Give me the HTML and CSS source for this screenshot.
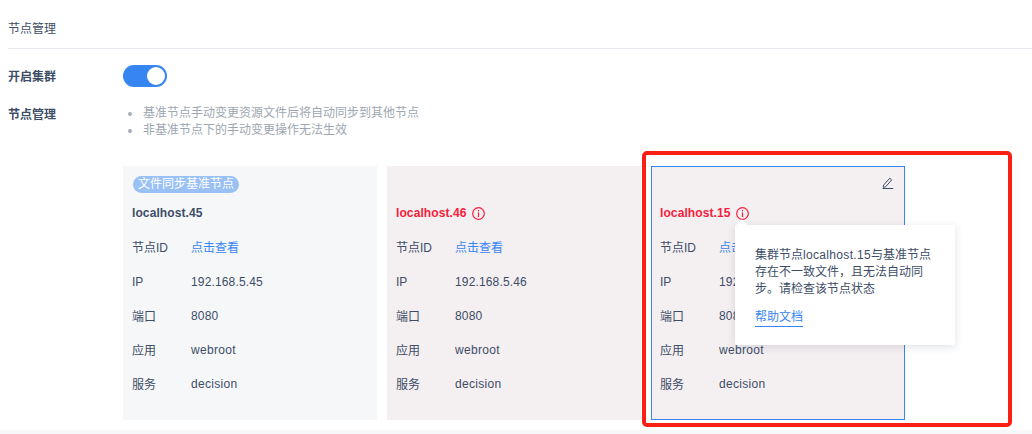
FILE: index.html
```html
<!DOCTYPE html>
<html lang="zh">
<head>
<meta charset="utf-8">
<title>节点管理</title>
<link rel="stylesheet" href="styles.css">
</head>
<body>
<div class="page">
  <header class="title">节点管理</header>
  <section class="form">
    <div class="row-switch">
      <div class="label">开启集群</div>
      <div class="switch"><span class="knob"></span></div>
    </div>
    <div class="row-manage">
      <div class="label">节点管理</div>
      <ul class="tips">
        <li>基准节点手动变更资源文件后将自动同步到其他节点</li>
        <li>非基准节点下的手动变更操作无法生效</li>
      </ul>
    </div>
    <div class="cards">
      <article class="card">
        <div class="badge-row"><span class="badge">文件同步基准节点</span></div>
        <div class="host">localhost.45</div>
        <dl class="props">
          <div class="prop"><dt>节点ID</dt><dd><a class="link">点击查看</a></dd></div>
          <div class="prop"><dt>IP</dt><dd>192.168.5.45</dd></div>
          <div class="prop"><dt>端口</dt><dd>8080</dd></div>
          <div class="prop"><dt>应用</dt><dd>webroot</dd></div>
          <div class="prop"><dt>服务</dt><dd>decision</dd></div>
        </dl>
      </article>
      <article class="card warn">
        <div class="badge-row"></div>
        <div class="host">localhost.46
          <svg class="info" viewBox="0 0 13 13"><circle cx="6.5" cy="6.5" r="5.8"/><path d="M6.5 3v1.4M6.5 5.4v4.6"/></svg>
        </div>
        <dl class="props">
          <div class="prop"><dt>节点ID</dt><dd><a class="link">点击查看</a></dd></div>
          <div class="prop"><dt>IP</dt><dd>192.168.5.46</dd></div>
          <div class="prop"><dt>端口</dt><dd>8080</dd></div>
          <div class="prop"><dt>应用</dt><dd>webroot</dd></div>
          <div class="prop"><dt>服务</dt><dd>decision</dd></div>
        </dl>
      </article>
      <article class="card warn active">
        <svg class="edit" viewBox="0 0 12 12"><path d="M1.5 8.2 7.8 1.2l1.9 1.7-6.2 7-2.2.4zM.6 11.5h10.6"/></svg>
        <div class="badge-row"></div>
        <div class="host">localhost.15
          <svg class="info" viewBox="0 0 13 13"><circle cx="6.5" cy="6.5" r="5.8"/><path d="M6.5 3v1.4M6.5 5.4v4.6"/></svg>
        </div>
        <dl class="props">
          <div class="prop"><dt>节点ID</dt><dd><a class="link">点击查看</a></dd></div>
          <div class="prop"><dt>IP</dt><dd>192.168.5.15</dd></div>
          <div class="prop"><dt>端口</dt><dd>8080</dd></div>
          <div class="prop"><dt>应用</dt><dd>webroot</dd></div>
          <div class="prop"><dt>服务</dt><dd>decision</dd></div>
        </dl>
        <div class="tooltip">
          <p>集群节点<span class="latin">localhost.15</span>与基准节点存在不一致文件，且无法自动同步。请检查该节点状态</p>
          <a class="help">帮助文档</a>
        </div>
      </article>
    </div>
  </section>
  <div class="annotation"></div>
</div>
</body>
</html>
```

FILE: styles.css
```css
* { box-sizing: border-box; }
html, body { margin: 0; padding: 0; }
body {
  width: 1032px;
  height: 434px;
  overflow: hidden;
  background: #fff;
  font-family: "Liberation Sans", "Noto Sans CJK SC", sans-serif;
  font-size: 12px;
  color: #3d4d66;
}
.page {
  position: relative;
  height: 434px;
  border-bottom: 4px solid #f7f8fa;
  padding-left: 8px;
}
.title {
  height: 49px;
  line-height: 17px;
  padding-top: 21px;
  border-bottom: 1px solid #e8e8ee;
}
.form { padding-top: 16px; }
.label { width: 115px; font-weight: 700; flex: none; }
.row-switch { display: flex; align-items: center; height: 22px; }
.row-switch .label { margin-top: -2px; }
.switch {
  width: 44px;
  height: 22px;
  border-radius: 11px;
  background: #3685f2;
  padding: 2px;
  display: flex;
  justify-content: flex-end;
}
.knob { width: 18px; height: 18px; border-radius: 50%; background: #fff; }
.row-manage { display: flex; margin-top: 20px; line-height: 16px; }
.tips {
  margin: -2px 0 0;
  padding: 0 0 0 5px;
  list-style: none;
  color: #9ea6b2;
  line-height: 17px;
}
.tips li { display: flex; align-items: center; gap: 11px; }
.tips li::before {
  content: "";
  width: 4px;
  height: 4px;
  border-radius: 50%;
  background: #a6adb9;
  flex: none;
}
.cards { display: flex; gap: 10px; margin: 27px 0 0 115px; }
.card {
  position: relative;
  width: 254px;
  height: 254px;
  padding: 0 9px;
  background: #f6f7f9;
}
.card.warn { background: #f4eff1; }
.card.active { border: 1px solid #3685f2; padding: 0 8px; }
.active .badge-row { height: 28px; margin-top: 9px; }
.badge-row { height: 28px; margin-top: 10px; display: flex; align-items: flex-start; }
.badge {
  height: 17px;
  line-height: 17px;
  margin-left: 1px;
  padding: 0 5px;
  border-radius: 9px;
  background: #99c1f5;
  color: #fff;
}
.host {
  display: flex;
  align-items: center;
  gap: 5px;
  height: 18px;
  font-weight: 700;
  letter-spacing: .1px;
  color: #3d4d66;
}
.warn .host { color: #f5213b; }
.info { width: 13px; height: 13px; fill: none; stroke: #f5213b; stroke-width: 1.2; }
.props { margin: 7px 0 0; }
.prop { display: flex; align-items: center; height: 34px; }
.prop:first-child { margin-bottom: 2px; }
.prop:nth-child(n+3) dt { margin-top: -2px; }
dt { width: 59px; flex: none; }
dd { margin: 0; letter-spacing: .15px; }
.prop:nth-child(n+4) dd { letter-spacing: .3px; }
.link { color: #3685f2; letter-spacing: 0; }
.edit {
  position: absolute;
  top: 10px;
  right: 10px;
  width: 12px;
  height: 12px;
  fill: none;
  stroke: #3d4d66;
  stroke-width: 1;
}
.tooltip {
  position: absolute;
  top: 58px;
  left: 83px;
  width: 220px;
  height: 120px;
  padding: 22px 20px;
  background: #fff;
  border-radius: 2px;
  box-shadow: 0 2px 8px rgba(61, 77, 102, .16);
  line-height: 17px;
}
.tooltip::before {
  content: "";
  position: absolute;
  top: -4px;
  left: 3px;
  width: 8px;
  height: 8px;
  background: #fff;
  transform: rotate(45deg);
}
.latin { letter-spacing: .33px; }
.tooltip p { margin: 0 0 11px; }
.help { color: #3685f2; border-bottom: 1px solid #3685f2; display: inline-block; height: 18px; }
.annotation {
  position: absolute;
  left: 642px;
  top: 151px;
  width: 370px;
  height: 276px;
  border: 4px solid #fb2016;
  border-radius: 5px;
}
```
